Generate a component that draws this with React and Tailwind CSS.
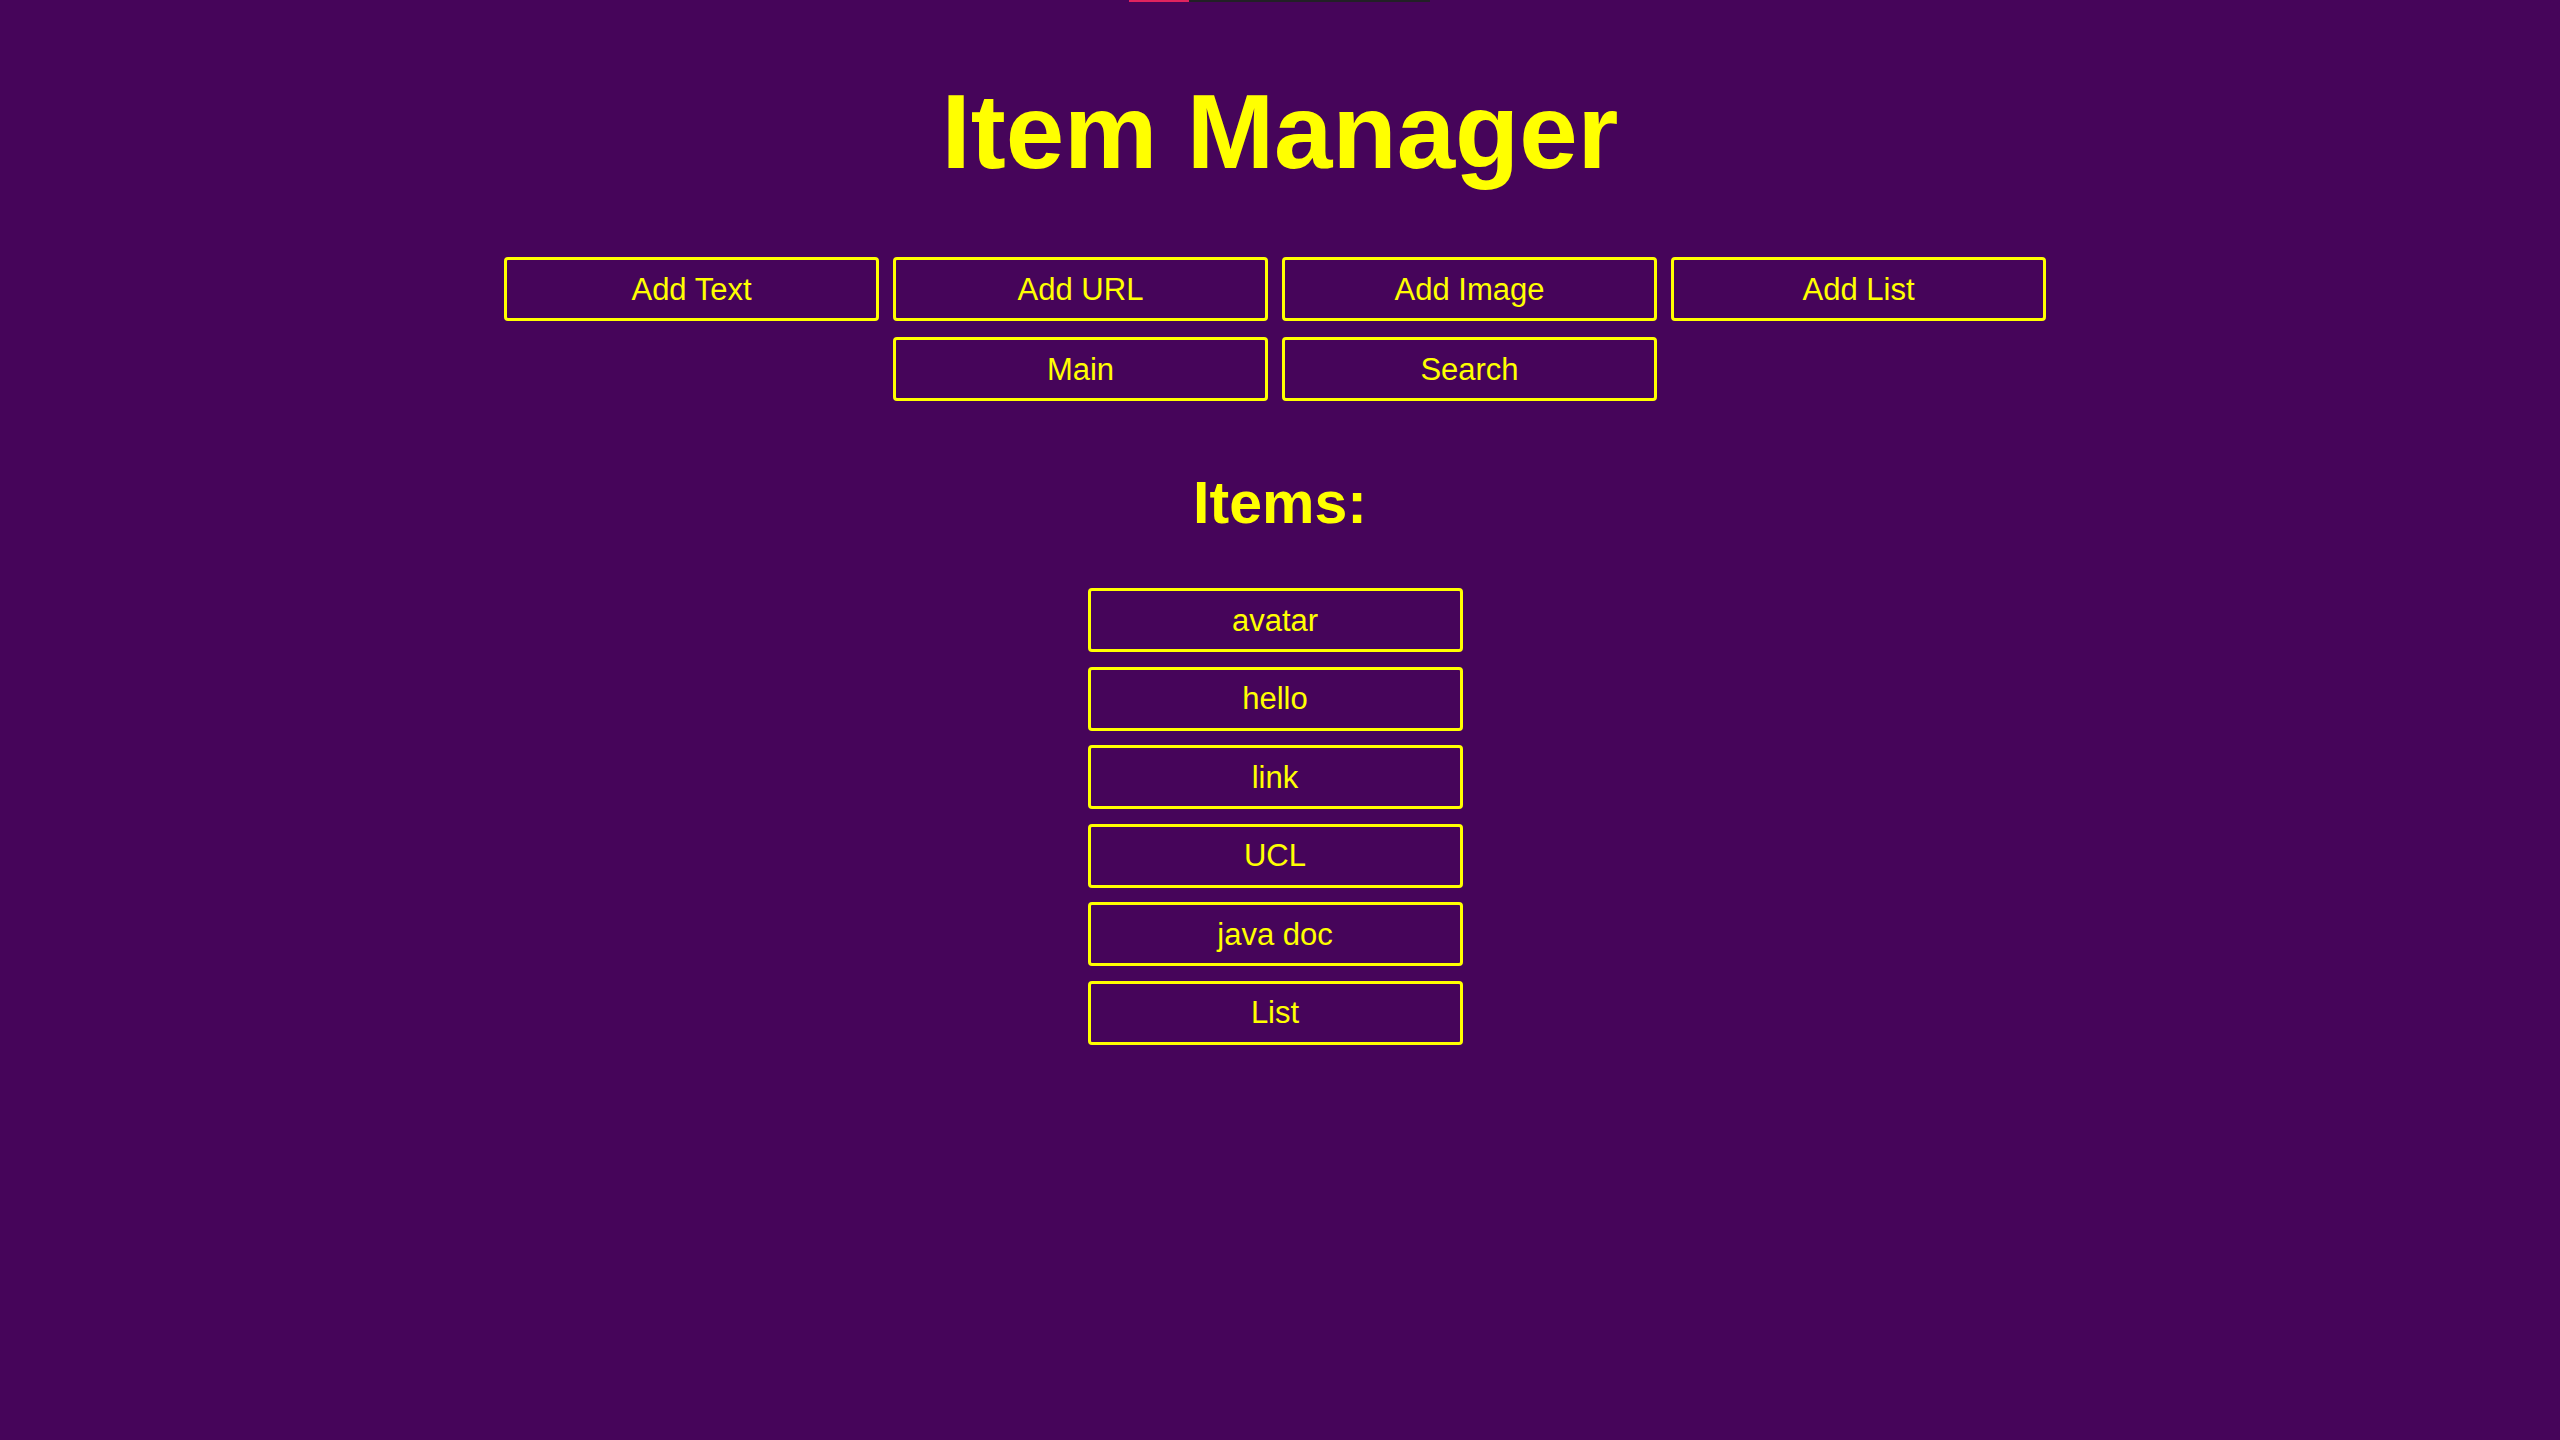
import React from "react";

const actions = ["Add Text", "Add URL", "Add Image", "Add List", "Main", "Search"];
const items = ["avatar", "hello", "link", "UCL", "java doc", "List"];

function OutlineButton({ label }) {
  return (
    <button className="w-[375px] h-[64px] border-[3px] border-[#ffff00] rounded-[4px] bg-transparent text-[#ffff00] text-[31px] leading-none flex items-center justify-center">
      {label}
    </button>
  );
}

export default function App() {
  return (
    <div
      className="relative min-h-[1440px] w-full bg-[#46055a] flex flex-col items-center"
      style={{ fontFamily: '"Century Gothic", "Liberation Sans", Arial, sans-serif' }}
    >
      {/* thin progress strip at the very top */}
      <div className="absolute top-0 left-[1129px] w-[301px] h-[2px] flex">
        <div className="w-[60px] bg-[#e0245e]" />
        <div className="flex-1 bg-[#222026]" />
      </div>

      <h1 className="mt-[79px] text-[105px] leading-none font-bold text-[#ffff00]">Item Manager</h1>

      <div className="mt-[73px] w-[1552px] pr-[10px] flex flex-wrap justify-center gap-x-[14px] gap-y-[16px]">
        {actions.map((a) => (
          <OutlineButton key={a} label={a} />
        ))}
      </div>

      <h2 className="mt-[73px] text-[59px] leading-none font-bold text-[#ffff00]">Items:</h2>

      <div className="mt-[55px] pr-[10px] flex flex-col gap-[14.6px]">
        {items.map((i) => (
          <OutlineButton key={i} label={i} />
        ))}
      </div>
    </div>
  );
}
